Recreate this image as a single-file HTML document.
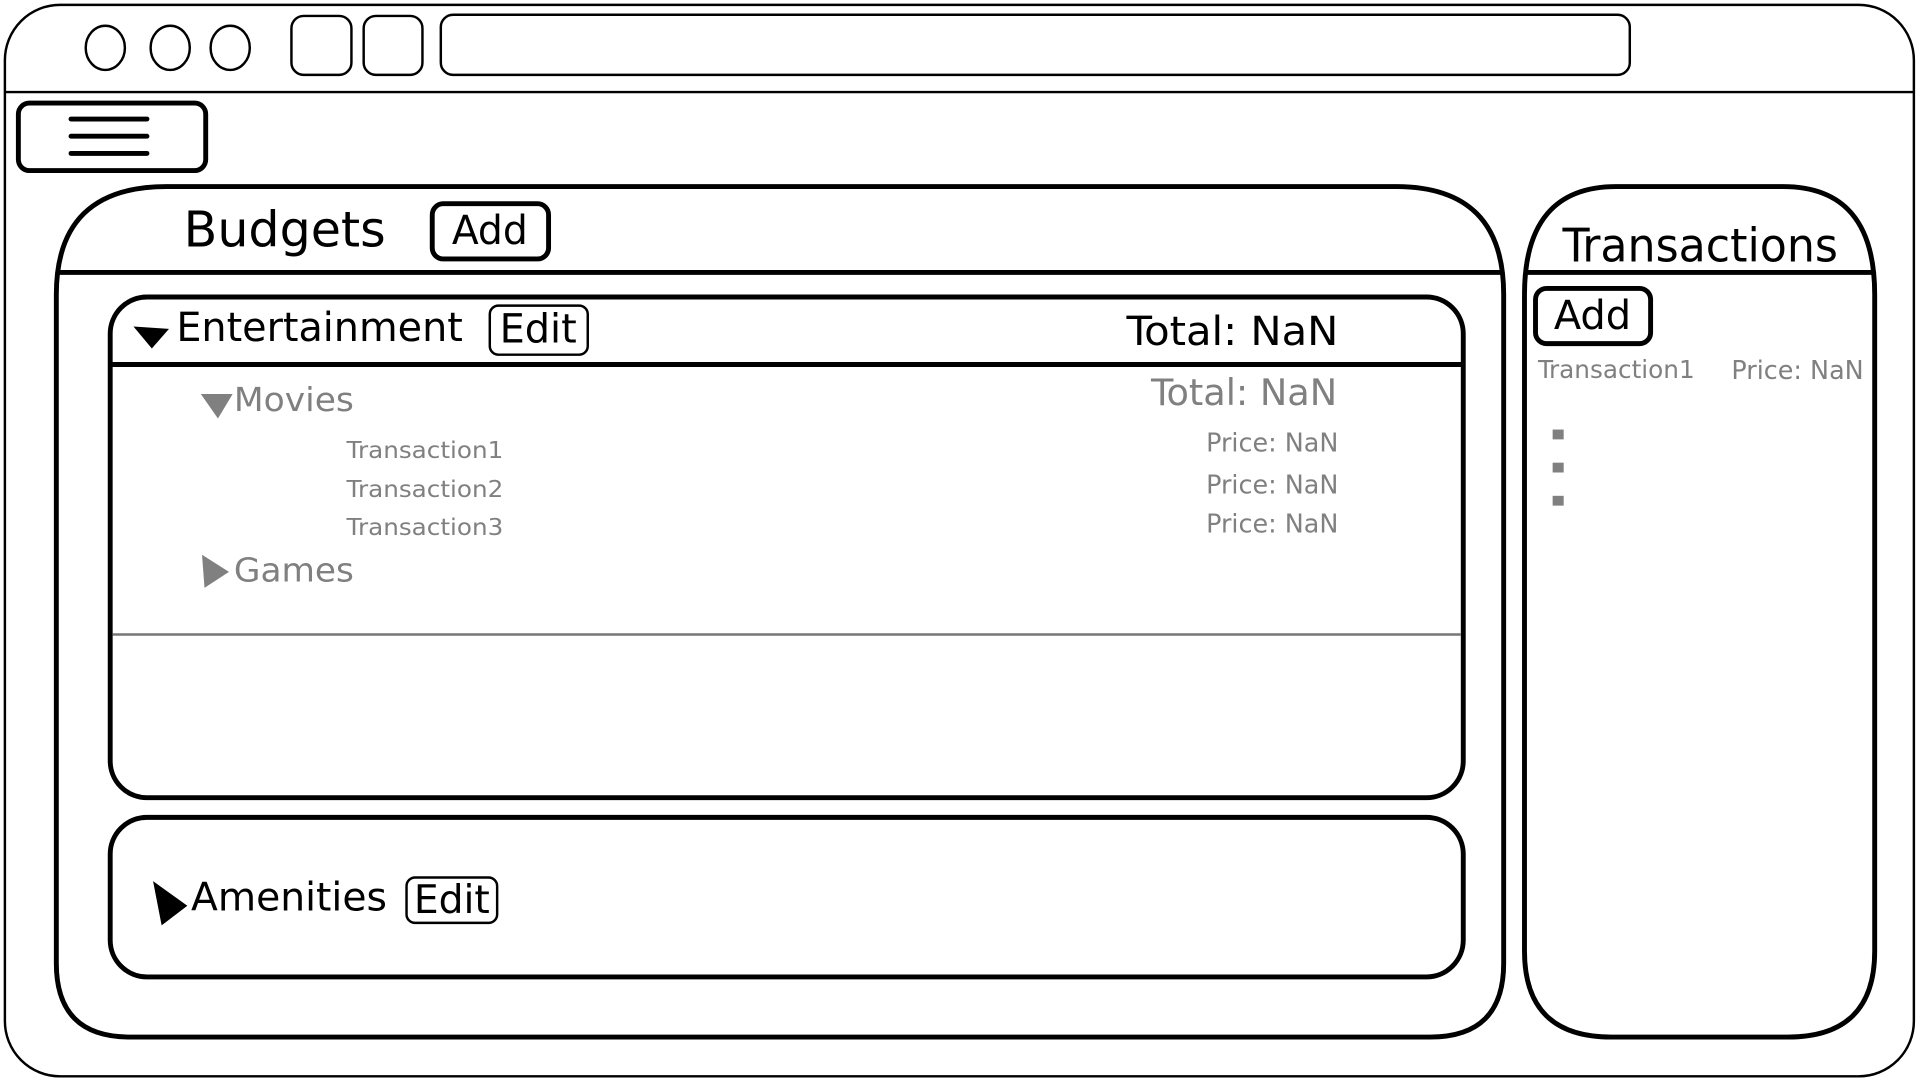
<!DOCTYPE html>
<html><head><meta charset="utf-8"><style>
html,body{margin:0;padding:0;background:#fff;overflow:hidden}
svg{display:block}
.c{font-family:"DejaVu Sans Condensed","DejaVu Sans","Liberation Sans",sans-serif}
.d{font-family:"DejaVu Sans","Liberation Sans",sans-serif}
</style></head><body>
<svg width="1920" height="1080" viewBox="0 0 1568 880" preserveAspectRatio="none" xmlns="http://www.w3.org/2000/svg">
<rect width="1568" height="880" fill="#fff"/>
<rect x="4" y="4" width="1559" height="873" rx="45" fill="none" stroke="#000" stroke-width="2"/>
<line x1="4" y1="75" x2="1563" y2="75" stroke="#000" stroke-width="2"/>
<ellipse cx="86" cy="39" rx="16" ry="18" fill="none" stroke="#000" stroke-width="2"/>
<ellipse cx="139" cy="39" rx="16" ry="18" fill="none" stroke="#000" stroke-width="2"/>
<ellipse cx="188" cy="39" rx="16" ry="18" fill="none" stroke="#000" stroke-width="2"/>
<rect x="238" y="13" width="49" height="48" rx="10" fill="none" stroke="#000" stroke-width="2"/>
<rect x="297" y="13" width="48" height="48" rx="10" fill="none" stroke="#000" stroke-width="2"/>
<rect x="360" y="12" width="971" height="49" rx="10" fill="none" stroke="#000" stroke-width="2"/>
<rect x="15" y="84" width="153" height="55" rx="9" fill="none" stroke="#000" stroke-width="4"/>
<g stroke="#000" stroke-width="4" stroke-linecap="round"><line x1="58" y1="97" x2="120" y2="97"/><line x1="58" y1="111" x2="120" y2="111"/><line x1="58" y1="125" x2="120" y2="125"/></g>
<path d="M46 240 Q46 152 136 152 H1140 Q1228 152 1228 240 V785 Q1228 845 1168 845 H106 Q46 845 46 785 Z" fill="none" stroke="#000" stroke-width="4"/>
<line x1="46" y1="222" x2="1228" y2="222" stroke="#000" stroke-width="4"/>
<text class="c" x="150" y="201" font-size="40" textLength="165" lengthAdjust="spacingAndGlyphs">Budgets</text>
<rect x="353" y="166" width="95" height="45" rx="9" fill="none" stroke="#000" stroke-width="4"/>
<text class="c" x="369" y="199" font-size="33" textLength="62" lengthAdjust="spacingAndGlyphs">Add</text>
<rect x="90" y="242" width="1105" height="408" rx="30" fill="none" stroke="#000" stroke-width="4"/>
<line x1="90" y1="297" x2="1195" y2="297" stroke="#000" stroke-width="4"/>
<line x1="92" y1="517" x2="1193" y2="517" stroke="#777" stroke-width="2"/>
<path d="M109 266 L138 268 L124 284 Z" fill="#000"/>
<text class="c" x="144" y="278" font-size="33" textLength="234" lengthAdjust="spacingAndGlyphs">Entertainment</text>
<rect x="400" y="249" width="80" height="40" rx="7" fill="none" stroke="#000" stroke-width="2"/>
<text class="c" x="408" y="279" font-size="33" textLength="63" lengthAdjust="spacingAndGlyphs">Edit</text>
<text class="c" x="920" y="281" font-size="33" textLength="173" lengthAdjust="spacingAndGlyphs">Total: NaN</text>
<g fill="#808080">
<path d="M164 321 L190 321 L178 341 Z"/>
<text class="d" x="191" y="335" font-size="27" textLength="98" lengthAdjust="spacingAndGlyphs">Movies</text>
<text class="c" x="940" y="330" font-size="30" textLength="152" lengthAdjust="spacingAndGlyphs">Total: NaN</text>
<text class="d" x="283" y="373" font-size="19" textLength="128" lengthAdjust="spacingAndGlyphs">Transaction1</text>
<text class="d" x="283" y="405" font-size="19" textLength="128" lengthAdjust="spacingAndGlyphs">Transaction2</text>
<text class="d" x="283" y="436" font-size="19" textLength="128" lengthAdjust="spacingAndGlyphs">Transaction3</text>
<text class="c" x="985" y="368" font-size="21" textLength="108" lengthAdjust="spacingAndGlyphs">Price: NaN</text>
<text class="c" x="985" y="402" font-size="21" textLength="108" lengthAdjust="spacingAndGlyphs">Price: NaN</text>
<text class="c" x="985" y="434" font-size="21" textLength="108" lengthAdjust="spacingAndGlyphs">Price: NaN</text>
<path d="M165 452 L187 466 L167 479 Z"/>
<text class="d" x="191" y="474" font-size="27" textLength="98" lengthAdjust="spacingAndGlyphs">Games</text>
</g>
<rect x="90" y="666" width="1105" height="130" rx="30" fill="none" stroke="#000" stroke-width="4"/>
<path d="M125 718 L153 738 L132 754 Z" fill="#000"/>
<text class="d" x="156" y="742" font-size="32" textLength="160" lengthAdjust="spacingAndGlyphs">Amenities</text>
<rect x="332" y="715" width="74" height="37" rx="7" fill="none" stroke="#000" stroke-width="2"/>
<text class="c" x="338" y="744" font-size="32" textLength="62" lengthAdjust="spacingAndGlyphs">Edit</text>
<path d="M1245 240 Q1245 152 1320 152 H1456 Q1531 152 1531 240 V775 Q1531 845 1460 845 H1316 Q1245 845 1245 775 Z" fill="none" stroke="#000" stroke-width="4"/>
<line x1="1245" y1="222" x2="1531" y2="222" stroke="#000" stroke-width="4"/>
<text class="c" x="1276" y="213" font-size="38" textLength="225" lengthAdjust="spacingAndGlyphs">Transactions</text>
<rect x="1254" y="235" width="94" height="45" rx="9" fill="none" stroke="#000" stroke-width="4"/>
<text class="c" x="1269" y="268" font-size="33" textLength="63" lengthAdjust="spacingAndGlyphs">Add</text>
<g fill="#808080">
<text class="c" x="1256" y="308" font-size="20" textLength="128" lengthAdjust="spacingAndGlyphs">Transaction1</text>
<text class="c" x="1414" y="309" font-size="21" textLength="108" lengthAdjust="spacingAndGlyphs">Price: NaN</text>
<rect x="1268" y="350" width="9" height="8"/>
<rect x="1268" y="377" width="9" height="8"/>
<rect x="1268" y="404" width="9" height="8"/>
</g>
</svg>
</body></html>
